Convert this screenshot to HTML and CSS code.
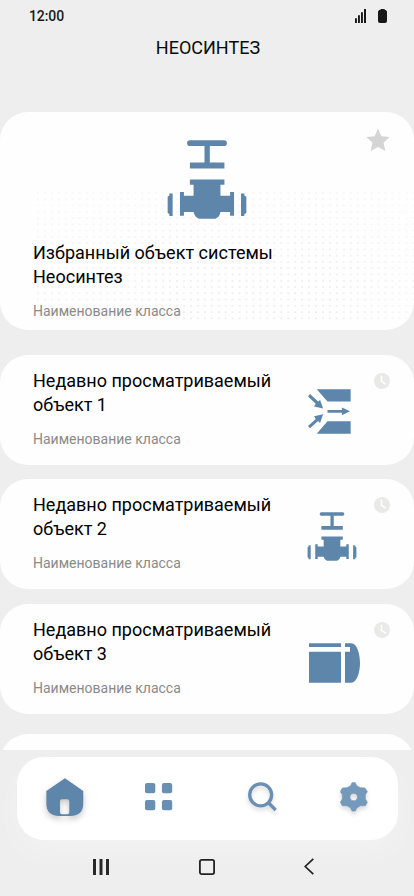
FILE: index.html
```html
<!DOCTYPE html>
<html lang="ru">
<head>
<meta charset="utf-8">
<meta name="viewport" content="width=device-width, initial-scale=1">
<title>НЕОСИНТЕЗ</title>
<link rel="stylesheet" href="styles.css">
</head>
<body>
<svg class="defs" width="0" height="0" aria-hidden="true">
  <symbol id="valve" viewBox="52 30 239 238">
    <path d="M120 31H223a8.5 8.5 0 0 1 0 17H180V98H224V116H120V98H164V48H120a8.5 8.5 0 0 1 0-17z"/>
    <path d="M120 149H224V165H212V198H241V187H253V258H241V247H212Q210 262 197 267H147Q134 262 131 247H102V258H90V187H102V198H131V165H120z"/>
    <path d="M58 191H68V259H58V253L53 250V201L58 197zM284 191H274V259H284V253L290 250V201L284 197z"/>
  </symbol>
  <symbol id="clock" viewBox="0 0 16 16">
    <circle cx="8" cy="8" r="8" fill="#e9e9e8"/>
    <path d="M7.500 2.800V8.200L11.800 11.300" fill="none" stroke="#fff" stroke-width="1.6"/>
  </symbol>
</svg>
<div class="screen">
  <header class="status">
    <span class="time">12:00</span>
    <svg class="signal" viewBox="0 0 11 14"><path d="M0 9.3h1.9V14H0zM3 6.2h1.9V14H3zM6 3.2h1.9V14H6zM9 0h2V14H9z"/></svg>
    <svg class="battery" viewBox="0 0 9 14"><path d="M3 0h3.2q.6 1 1.8 1.2 1 .6 1 2V12q0 2-2 2H2q-2 0-2-2V3.200q0-1.500 1-2Q2.400 1 3 0z"/></svg>
  </header>
  <h1 class="title">НЕОСИНТЕЗ</h1>
  <main class="feed">
    <article class="card hero">
      <svg class="dots" width="377" height="130" aria-hidden="true">
        <defs>
          <pattern id="grid" width="6.950" height="6.270" patternUnits="userSpaceOnUse"><circle cx="1" cy="1" r=".7" fill="#dadada"/></pattern>
          <linearGradient id="fade" x2="1" y2="0"><stop offset="0" stop-color="#999"/><stop offset=".4" stop-color="#fff"/><stop offset=".8" stop-color="#fff"/><stop offset="1" stop-color="#888"/></linearGradient>
          <linearGradient id="fall" x2="0" y2="1"><stop offset="0" stop-color="#fefefe" stop-opacity=".5"/><stop offset=".6" stop-color="#fefefe" stop-opacity="0"/></linearGradient>
          <mask id="soft"><rect width="377" height="130" fill="url(#fade)"/></mask>
        </defs>
        <rect width="377" height="128" fill="url(#grid)" mask="url(#soft)"/>
        <rect width="377" height="128" fill="url(#fall)"/>
      </svg>
      <svg class="hero-icon"><use href="#valve"/></svg>
      <svg class="star" viewBox="0 0 24 24"><path d="M12 .5L15.300 8.200L23.700 9L17.600 14.800L19.300 23L12 18.900L4.700 23L6.400 14.800L.3 9L8.700 8.200z"/></svg>
      <h2>Избранный объект системы<br>Неосинтез</h2>
      <p>Наименование класса</p>
    </article>
    <article class="card first">
      <svg class="kind reducer" viewBox="54 116 128 134">
        <path d="M80 117H181V153H112zM112 212H181V249H80z"/>
        <path d="M112 178.500H155V171L179 182.500L155 194V186.500H112zM60 131L84 153L90 149L99 174L72 168L77 160L54 138zM54 226L77 205L72 197L99 191L90 217L84 211L60 233z"/>
      </svg>
      <svg class="clock"><use href="#clock"/></svg>
      <h2>Недавно просматриваемый<br>объект 1</h2>
      <p>Наименование класса</p>
    </article>
    <article class="card second">
      <svg class="kind valve"><use href="#valve"/></svg>
      <svg class="clock"><use href="#clock"/></svg>
      <h2>Недавно просматриваемый<br>объект 2</h2>
      <p>Наименование класса</p>
    </article>
    <article class="card third">
      <svg class="kind tank" viewBox="57 129 153 120">
        <path d="M57 130H153V141H57zM57 155H153V248H57zM165 130H184C201 130 210 162 210 189S201 248 184 248H165V155H180V141H165z"/>
      </svg>
      <svg class="clock"><use href="#clock"/></svg>
      <h2>Недавно просматриваемый<br>объект 3</h2>
      <p>Наименование класса</p>
    </article>
    <article class="card next"></article>
  </main>
  <nav class="tabs">
    <svg class="home" viewBox="137 158 113 115"><path fill-rule="evenodd" d="M194 159L249 197V234Q249 272 210 272H177Q138 272 138 234V197zM185 222Q179 222 179 228V261Q179 267 185 267H201Q207 267 207 261V228Q207 222 201 222z"/></svg>
    <svg class="apps" viewBox="0 0 27 27"><rect width="10.300" height="10.300" rx="2"/><rect x="16.900" width="10.300" height="10.300" rx="2"/><rect y="16.900" width="10.300" height="10.300" rx="2"/><rect x="16.900" y="16.900" width="10.300" height="10.300" rx="2"/></svg>
    <svg class="search" viewBox="123 170 87 87"><circle cx="161" cy="208.500" r="33"/><path d="M185 233L206 254"/></svg>
    <svg class="gear" viewBox="399 170 83 89"><path fill-rule="evenodd" d="M435 172H445L449 181L460 187L474 188L481 199L475 208V221L481 231L475 241L460 241L449 248L445 257H435L431 248L420 241L406 241L400 231L406 221V208L400 199L406 188L420 187L431 181zM440 203.500a11.500 11.500 0 1 0 .1 0z" stroke-width="2" stroke-linejoin="round"/></svg>
  </nav>
  <footer class="system">
    <svg class="recent" viewBox="0 0 16 16"><path d="M0 0h3v16H0zM6.500 0h3v16h-3zM13 0h3v16h-3z"/></svg>
    <svg class="square" viewBox="0 0 16 16"><rect x=".9" y=".9" width="14.200" height="14.200" rx="1.800"/></svg>
    <svg class="back" viewBox="0 0 10 17"><path d="M9.300 .8L1.200 8.500L9.300 16.200"/></svg>
  </footer>
</div>
</body>
</html>
```
FILE: styles.css
```css
* { box-sizing: border-box; }
body { margin: 0; background: #eee; font-family: Roboto, sans-serif; }
svg { display: block; }
.defs { position: absolute; }
.screen { width: 414px; height: 896px; overflow: hidden; display: flex; flex-direction: column; background: #eee; }

.status { height: 32px; flex: none; display: flex; align-items: center; padding-left: 29px; color: #181818; }
.time { font-size: 14px; font-weight: 500; line-height: 16px; margin-right: auto; letter-spacing: -.1px; }
.signal { width: 11px; height: 14px; margin-right: 12px; fill: #181818; }
.battery { width: 9px; height: 14px; margin-right: 27px; fill: #181818; }
.title { flex: none; margin: 0; height: 80px; padding: 4px 0 0 2px; font-size: 18px; font-weight: 400; line-height: 24px; text-align: center; color: #0b0b0b; }

.feed { flex: none; height: 638px; overflow: hidden; }
.card { position: relative; height: 110px; padding: 14px 33px 0; border-radius: 28px; background: #fefefe; margin-bottom: 14px; }
.card h2 { position: relative; margin: 0; font-size: 18px; font-weight: 400; line-height: 24px; color: #000; }
.card p { position: relative; margin: 14px 0 0; font-size: 14px; line-height: 16px; color: #8a8a8a; }
.hero { height: 218px; padding-top: 28px; margin-bottom: 25px; overflow: hidden; }
.hero h2 { letter-spacing: .03px; }
.hero-icon { position: relative; width: 80px; height: 79px; margin: 0 auto 22px; fill: #5e86ab; }
.dots { position: absolute; left: 37px; top: 80px; }
.star { position: absolute; right: 24px; top: 16px; width: 24px; height: 24px; fill: #d5d5d5; }
.clock { position: absolute; right: 24px; top: 18px; width: 16px; height: 16px; }
.second { margin-bottom: 15px; }
.third { margin-bottom: 20px; }
.kind { position: absolute; left: 308px; fill: #5e86ab; }
.reducer { top: 34px; width: 43px; height: 45px; }
.valve { left: 307px; top: 33px; width: 50px; height: 49px; }
.tank { left: 309px; top: 39px; width: 51px; height: 40px; }

.tabs { flex: none; width: 381px; height: 83px; margin: 7px 0 0 17px; border-radius: 27px; background: #fff; box-shadow: 0 12px 30px rgba(255, 255, 255, .3); display: flex; align-items: flex-start; padding-left: 29px; }
.tabs svg { overflow: visible; fill: #5e86ab; }
.tabs .home { width: 37.6px; height: 38.3px; margin: 20.7px 61.2px 0 0; filter: drop-shadow(0 3px 3px rgba(0, 0, 0, .22)); }
.tabs .apps { width: 27px; height: 27px; margin: 26px 76.2px 0 0; fill: #6990b3; }
.tabs .search { width: 29px; height: 29px; margin: 24.700px 63px 0 0; fill: none; stroke: #6990b3; stroke-width: 10; filter: drop-shadow(0 3px 2px rgba(0, 0, 0, .15)); }
.tabs .gear { width: 27.700px; height: 29.700px; margin-top: 24.700px; fill: #7599ba; stroke: #7599ba; filter: drop-shadow(0 3px 2px rgba(0, 0, 0, .15)); }

.system { flex: none; height: 56px; display: flex; padding: 19px 0 0 93px; }
.system svg { fill: #292929; }
.recent { width: 16px; height: 16px; margin: 0 90px 0 0; }
.system .square { width: 16px; height: 16px; margin-right: 89px; fill: none; stroke: #222; stroke-width: 1.8; }
.system .back { width: 10px; height: 17px; margin-top: -1.500px; fill: none; stroke: #222; stroke-width: 1.7; }
```
